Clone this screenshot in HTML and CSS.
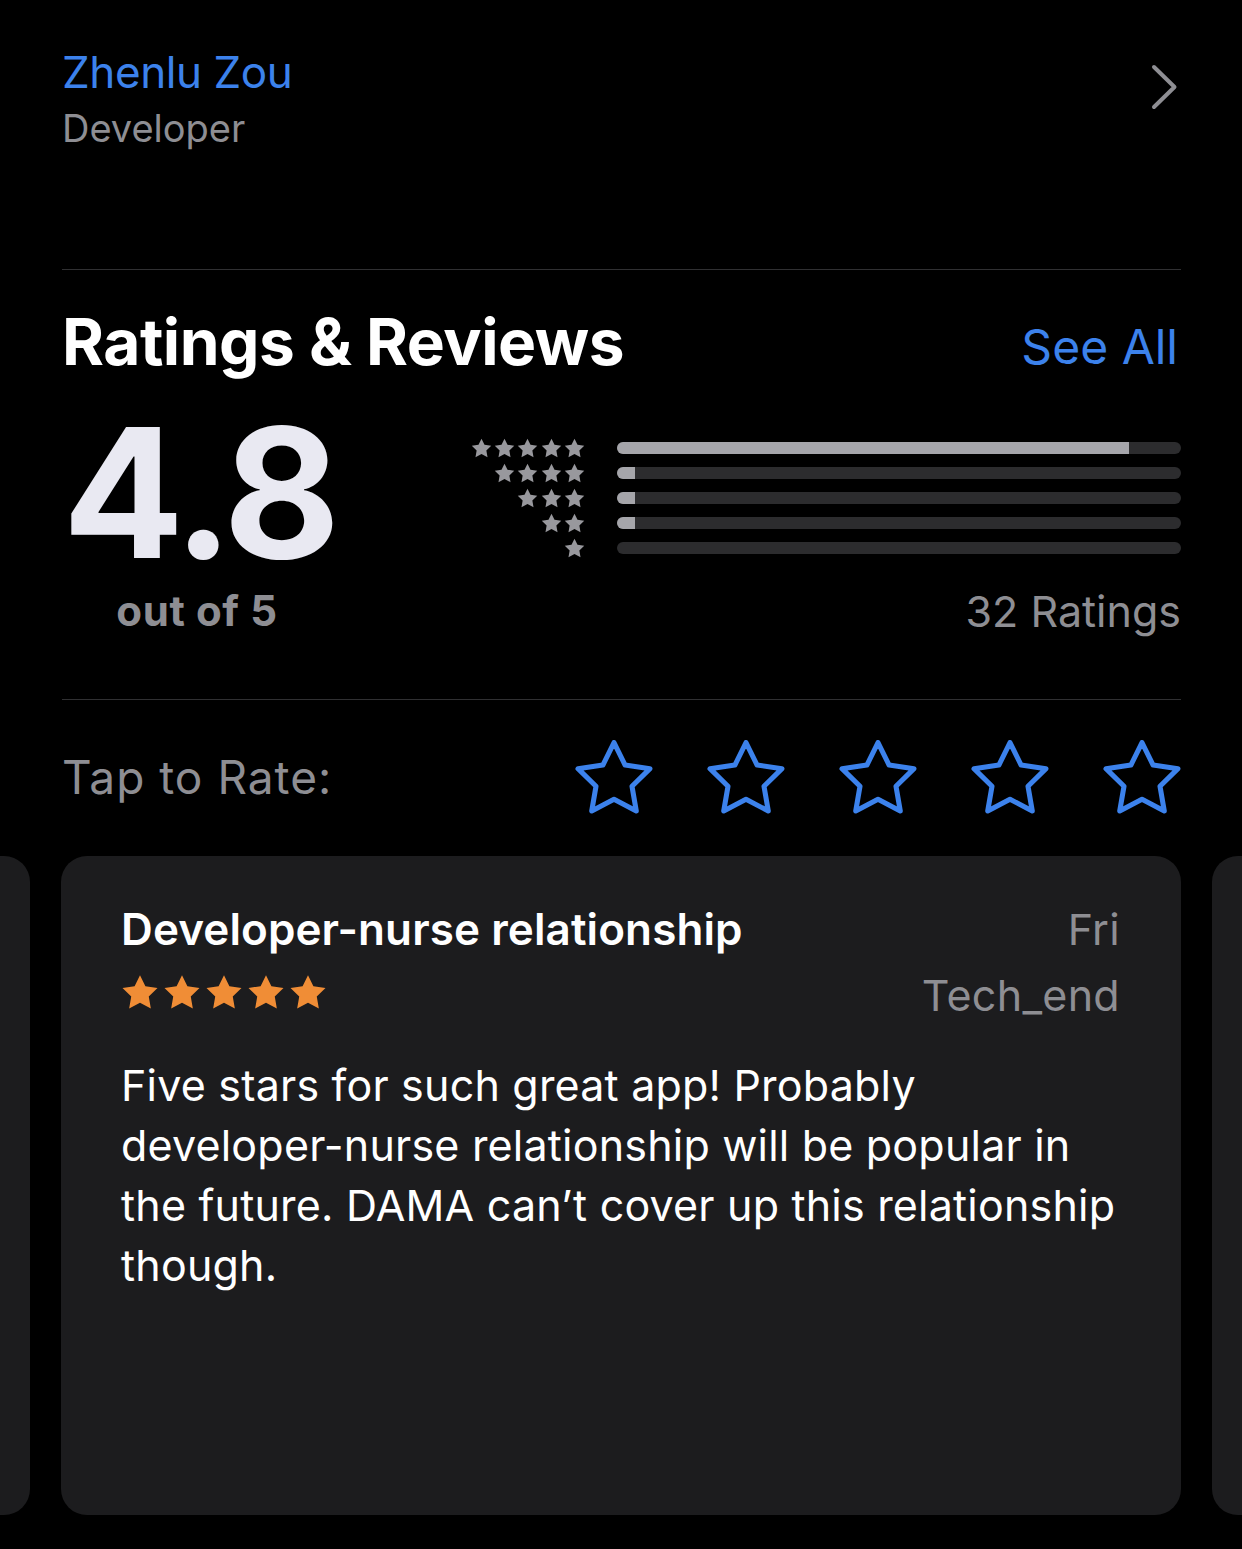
FILE: index.html
```html
<!DOCTYPE html>
<html lang="en">
<head>
<meta charset="utf-8">
<title>Ratings &amp; Reviews</title>
<link rel="stylesheet" href="styles.css">
</head>
<body>
<svg class="defs" width="0" height="0" aria-hidden="true">
  <defs>
    <symbol id="star" viewBox="4 4 92 88">
      <polygon points="50,7 63.2,33.8 92.8,38.1 71.4,59 76.5,88.4 50,74.5 23.5,88.4 28.6,59 7.2,38.1 36.8,33.8" stroke-linejoin="round"/>
    </symbol>
  </defs>
</svg>
<main class="page">
  <section class="developer">
    <div class="dev-text">
      <div class="dev-name">Zhenlu Zou</div>
      <div class="dev-role">Developer</div>
    </div>
    <svg class="chevron" width="30" height="46" viewBox="0 0 30 46"><polyline points="4,3 24.5,23 4,43" fill="none" stroke="currentColor" stroke-width="4" stroke-linecap="round" stroke-linejoin="round"/></svg>
  </section>
  <div class="sep"></div>
  <section class="ratings">
    <div class="ratings-head">
      <h2 class="title">Ratings &amp; Reviews</h2>
      <span class="see-all">See All</span>
    </div>
    <div class="summary">
      <div class="score">
        <div class="score-num">4.8</div>
        <div class="score-sub">out of 5</div>
      </div>
      <div class="hist">
        <div class="hist-rows">
          <div class="hist-row">
            <div class="hist-stars"><svg><use href="#star"/></svg><svg><use href="#star"/></svg><svg><use href="#star"/></svg><svg><use href="#star"/></svg><svg><use href="#star"/></svg></div>
            <div class="bar"><div class="fill" style="width:90.8%"></div></div>
          </div>
          <div class="hist-row">
            <div class="hist-stars"><svg><use href="#star"/></svg><svg><use href="#star"/></svg><svg><use href="#star"/></svg><svg><use href="#star"/></svg></div>
            <div class="bar"><div class="fill" style="width:3.2%"></div></div>
          </div>
          <div class="hist-row">
            <div class="hist-stars"><svg><use href="#star"/></svg><svg><use href="#star"/></svg><svg><use href="#star"/></svg></div>
            <div class="bar"><div class="fill" style="width:3.2%"></div></div>
          </div>
          <div class="hist-row">
            <div class="hist-stars"><svg><use href="#star"/></svg><svg><use href="#star"/></svg></div>
            <div class="bar"><div class="fill" style="width:3.2%"></div></div>
          </div>
          <div class="hist-row">
            <div class="hist-stars"><svg><use href="#star"/></svg></div>
            <div class="bar"><div class="fill" style="width:0%"></div></div>
          </div>
        </div>
        <div class="count">32 Ratings</div>
      </div>
    </div>
  </section>
  <div class="sep"></div>
  <section class="tap">
    <span class="tap-label">Tap to Rate:</span>
    <div class="tap-stars">
      <svg class="tap-star"><use href="#star"/></svg>
      <svg class="tap-star"><use href="#star"/></svg>
      <svg class="tap-star"><use href="#star"/></svg>
      <svg class="tap-star"><use href="#star"/></svg>
      <svg class="tap-star"><use href="#star"/></svg>
    </div>
  </section>
  <section class="carousel">
    <div class="card card-peek"></div>
    <article class="card">
      <div class="review-head">
        <div class="review-title">Developer-nurse relationship</div>
        <div class="review-date">Fri</div>
        <div class="review-stars"><svg><use href="#star"/></svg><svg><use href="#star"/></svg><svg><use href="#star"/></svg><svg><use href="#star"/></svg><svg><use href="#star"/></svg></div>
        <div class="review-author">Tech_end</div>
      </div>
      <p class="review-body">Five stars for such great app! Probably developer-&#8288;nurse relationship will be popular in the future. DAMA can’t cover up this relationship though.</p>
    </article>
    <div class="card card-peek"></div>
  </section>
</main>
</body>
</html>
```
FILE: styles.css
```css
* { box-sizing: border-box; }
html, body { margin: 0; padding: 0; background: #000; }
body {
  font-family: Inter, "Noto Sans", "Liberation Sans", sans-serif;
  color: #fff;
  width: 1242px;
  height: 1549px;
  overflow: hidden;
}
.defs { position: absolute; width: 0; height: 0; }

.page { display: flex; flex-direction: column; }

.developer {
  display: flex;
  align-items: flex-start;
  justify-content: space-between;
  padding: 44px 61px 0 62px;
  height: 269px;
}
.dev-name {
  font-size: 44px;
  line-height: 56px;
  color: #3c82ec;
  letter-spacing: -0.4px;
}
.dev-role {
  font-size: 38px;
  line-height: 56px;
  color: #8e8e93;
}
.chevron { color: #8e8e93; margin-top: 20px; margin-right: 1px; }

.sep { height: 1px; background: #303032; margin: 0 61px 0 62px; }

.ratings { padding: 0 61px 0 62px; height: 429px; }
.ratings-head {
  display: flex;
  justify-content: space-between;
  align-items: baseline;
  margin-top: 33px;
}
.title {
  margin: 0;
  font-size: 64px;
  line-height: 78px;
  font-weight: 700;
  letter-spacing: -0.5px;
}
.see-all {
  font-size: 48px;
  color: #3c82ec;
  margin-right: 3px;
  position: relative;
  top: -1px;
}

.summary {
  display: flex;
  align-items: flex-start;
  margin-top: 37px;
}
.score {
  display: flex;
  flex-direction: column;
  align-items: center;
  width: 270px;
}
.score-num {
  font-size: 180px;
  line-height: 150px;
  font-weight: 700;
  color: #e9e9f2;
  letter-spacing: -5px;
  margin-left: 4px;
}
.score-sub {
  font-size: 42px;
  line-height: 46px;
  font-weight: 700;
  color: #8e8e93;
  letter-spacing: 0.6px;
  margin-top: 20px;
}

.hist {
  flex: 1;
  display: flex;
  flex-direction: column;
  align-items: flex-end;
}
.hist-rows { display: flex; flex-direction: column; width: 100%; padding-left: 137px; margin-top: 17px; }
.hist-row { display: flex; align-items: center; height: 25px; }
.hist-stars {
  width: 116px;
  display: flex;
  justify-content: flex-end;
  gap: 2.3px;
  margin-right: 32px;
}
.hist-stars svg { width: 21px; height: 20px; fill: #98989d; }
.bar {
  flex: 1;
  height: 12px;
  border-radius: 6px;
  background: #2c2c2e;
  overflow: hidden;
}
.fill { height: 100%; background: #a5a5aa; }
.count {
  font-size: 43px;
  line-height: 52px;
  color: #8e8e93;
  margin-top: 25px;
}

.tap {
  display: flex;
  justify-content: space-between;
  align-items: center;
  padding: 40px 61px 42px 62px;
}
.tap-label { font-size: 46px; color: #8e8e93; letter-spacing: 1px; }
.tap-stars { display: flex; gap: 54px; }
.tap-star {
  width: 78px;
  height: 74px;
  fill: none;
  stroke: #3c82ec;
  stroke-width: 6;
}

.carousel {
  display: flex;
  justify-content: center;
  gap: 31px;
}
.card {
  flex: 0 0 1120px;
  height: 659px;
  border-radius: 26px;
  background: #1c1c1e;
  padding: 48px 61px 0 60px;
}
.review-head {
  display: grid;
  grid-template-columns: 1fr auto;
  row-gap: 16px;
  align-items: center;
}
.review-title { font-size: 44px; line-height: 50px; font-weight: 600; letter-spacing: 0.1px; }
.review-date, .review-author { font-size: 43px; line-height: 50px; color: #8e8e93; text-align: right; letter-spacing: 0.3px; }
.review-stars { display: flex; gap: 4px; margin-top: -6px; }
.review-stars svg { width: 38px; height: 36px; fill: #f08d36; }
.review-body {
  margin: 35px 0 0;
  font-size: 43px;
  line-height: 60px;
  letter-spacing: 0.2px;
}
```
